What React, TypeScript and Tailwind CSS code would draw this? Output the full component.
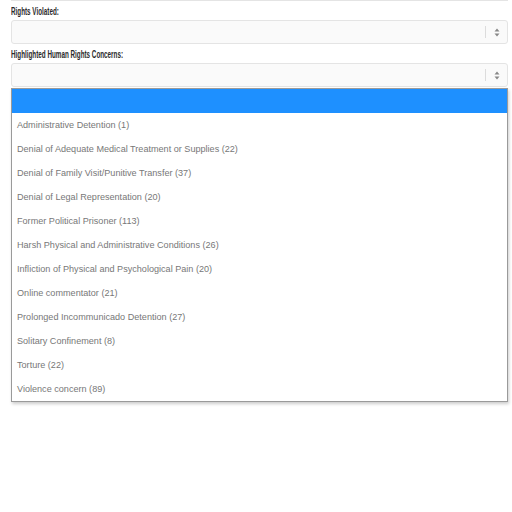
const OPTIONS = [
  "Administrative Detention (1)",
  "Denial of Adequate Medical Treatment or Supplies (22)",
  "Denial of Family Visit/Punitive Transfer (37)",
  "Denial of Legal Representation (20)",
  "Former Political Prisoner (113)",
  "Harsh Physical and Administrative Conditions (26)",
  "Infliction of Physical and Psychological Pain (20)",
  "Online commentator (21)",
  "Prolonged Incommunicado Detention (27)",
  "Solitary Confinement (8)",
  "Torture (22)",
  "Violence concern (89)",
];

function Arrows() {
  return (
    <svg width="6" height="9" viewBox="0 0 6 9" className="text-[#888]">
      <path d="M3 0.5 L5.5 3.5 H0.5 Z" fill="currentColor" />
      <path d="M3 8.5 L5.5 5.5 H0.5 Z" fill="currentColor" />
    </svg>
  );
}

function Label({ children }: { children: string }) {
  return (
    <div className="flex h-[19px] items-start pl-[11px] pt-[6px] leading-none">
      <span className="inline-block origin-left scale-x-[0.63] whitespace-nowrap text-[10px] font-bold leading-[10px] text-[#2a2a2a]">
        {children}
      </span>
    </div>
  );
}

function SelectBox() {
  return (
    <div className="flex h-[24px] items-center rounded-[3px] border border-[#e4e4e4] bg-[#fafafa]">
      <div className="flex-1" />
      <div className="h-[12px] w-px bg-[#dcdcdc]" />
      <div className="flex w-[21px] justify-center">
        <Arrows />
      </div>
    </div>
  );
}

export default function App() {
  return (
    <div className="h-[512px] w-[512px] bg-white font-['Liberation_Sans',Arial,sans-serif]">
      <div className="ml-[11px] mr-[4px] h-px bg-[#e4e4e4]" />
      <Label>Rights Violated:</Label>
      <div className="ml-[11px] mr-[4px]">
        <SelectBox />
      </div>
      <Label>Highlighted Human Rights Concerns:</Label>
      <div className="ml-[11px] mr-[4px]">
        <SelectBox />
        <div className="relative">
          <div className="absolute left-0 right-0 top-[1px] border border-[#9a9a9a] bg-white shadow-[1px_2px_3px_rgba(0,0,0,0.2)]">
            <div className="h-[24px] bg-[#1e90ff]" />
            {OPTIONS.map((o) => (
              <div
                key={o}
                className="flex h-[24px] items-center pl-[5px] pt-px text-[9.1px] text-[#777]"
              >
                {o}
              </div>
            ))}
          </div>
        </div>
      </div>
    </div>
  );
}
